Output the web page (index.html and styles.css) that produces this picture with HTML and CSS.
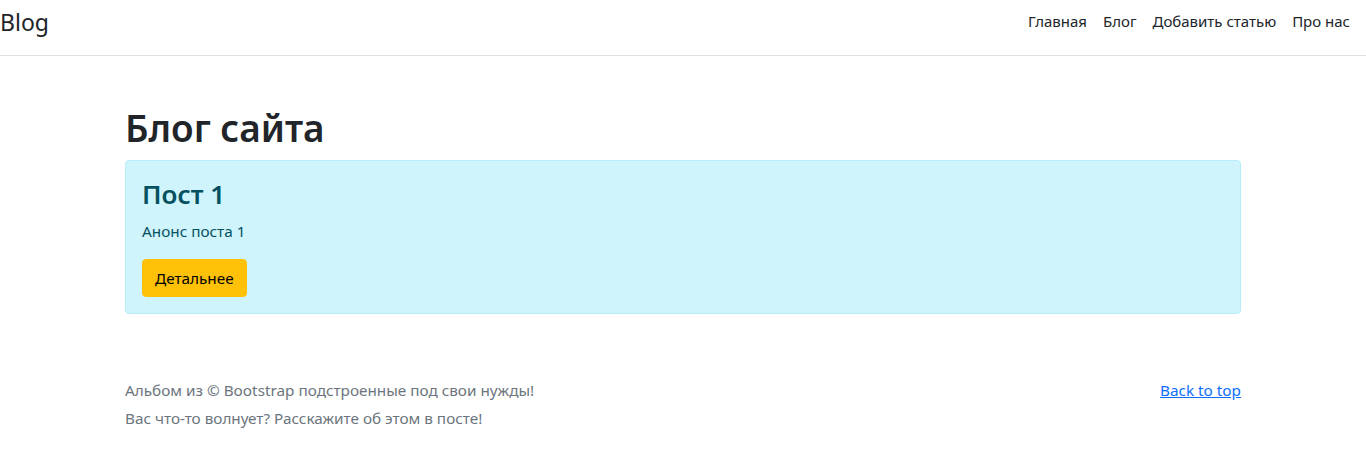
FILE: index.html
```html
<!DOCTYPE html>
<html lang="ru">
<head>
<meta charset="utf-8">
<title>Blog</title>
<link rel="stylesheet" href="styles.css">
</head>
<body>
<header class="site-header">
  <a class="brand" href="#">Blog</a>
  <nav class="nav">
    <a class="nav-link" href="#">Главная</a>
    <a class="nav-link" href="#">Блог</a>
    <a class="nav-link" href="#">Добавить статью</a>
    <a class="nav-link" href="#">Про нас</a>
  </nav>
</header>
<main class="main">
  <div class="container">
    <h1 class="page-title">Блог сайта</h1>
    <div class="alert">
      <h3 class="post-title">Пост 1</h3>
      <p class="post-anons">Анонс поста 1</p>
      <a class="btn-warning" href="#">Детальнее</a>
    </div>
  </div>
</main>
<footer class="footer">
  <div class="container footer-inner">
    <div class="footer-text">
      <p class="line">Альбом из © Bootstrap подстроенные под свои нужды!</p>
      <p class="line">Вас что-то волнует? Расскажите об этом в посте!</p>
    </div>
    <a class="back-top" href="#">Back to top</a>
  </div>
</footer>
</body>
</html>
```
FILE: styles.css
```css
* { box-sizing: border-box; }
body {
  margin: 0;
  font-family: "Noto Sans", "Open Sans", sans-serif;
  font-size: 15.3px;
  line-height: 24px;
  color: #212529;
  background: #fff;
}
a { text-decoration: none; }
.site-header {
  display: flex;
  align-items: center;
  justify-content: space-between;
  height: 56px;
  border-bottom: 1px solid #dee2e6;
  padding: 0 8px 0 0;
}
.brand {
  font-size: 23px;
  line-height: 30px;
  color: #212529;
  padding-bottom: 12px;
}
.nav { display: flex; padding-bottom: 14px; }
.nav-link {
  color: #212529;
  padding: 0 8px;
  font-size: 15px;
}
.container {
  width: 1140px;
  margin: 0 auto;
  padding: 0 12px;
}
.main { padding: 48px 0; }
.page-title {
  margin: 0 0 8px;
  font-size: 37px;
  line-height: 48px;
  font-weight: 600;
}
.alert {
  background: #cff4fc;
  border: 1px solid #b6effb;
  color: #055160;
  border-radius: 4px;
  padding: 16px;
  margin-bottom: 16px;
}
.post-title {
  margin: 0 0 8px;
  font-size: 26px;
  line-height: 34px;
  font-weight: 600;
}
.post-anons {
  margin: 0 0 16px;
}
.btn-warning {
  display: inline-block;
  background: #ffc107;
  color: #000;
  border: 1px solid #ffc107;
  border-radius: 4px;
  padding: 6px 12px;
  line-height: 24px;
}
.footer-inner {
  display: flex;
  justify-content: space-between;
  align-items: flex-start;
  color: #6c757d;
}
.line { margin: 0 0 4px; }
.back-top {
  color: #0d6efd;
  text-decoration: underline;
}
```
